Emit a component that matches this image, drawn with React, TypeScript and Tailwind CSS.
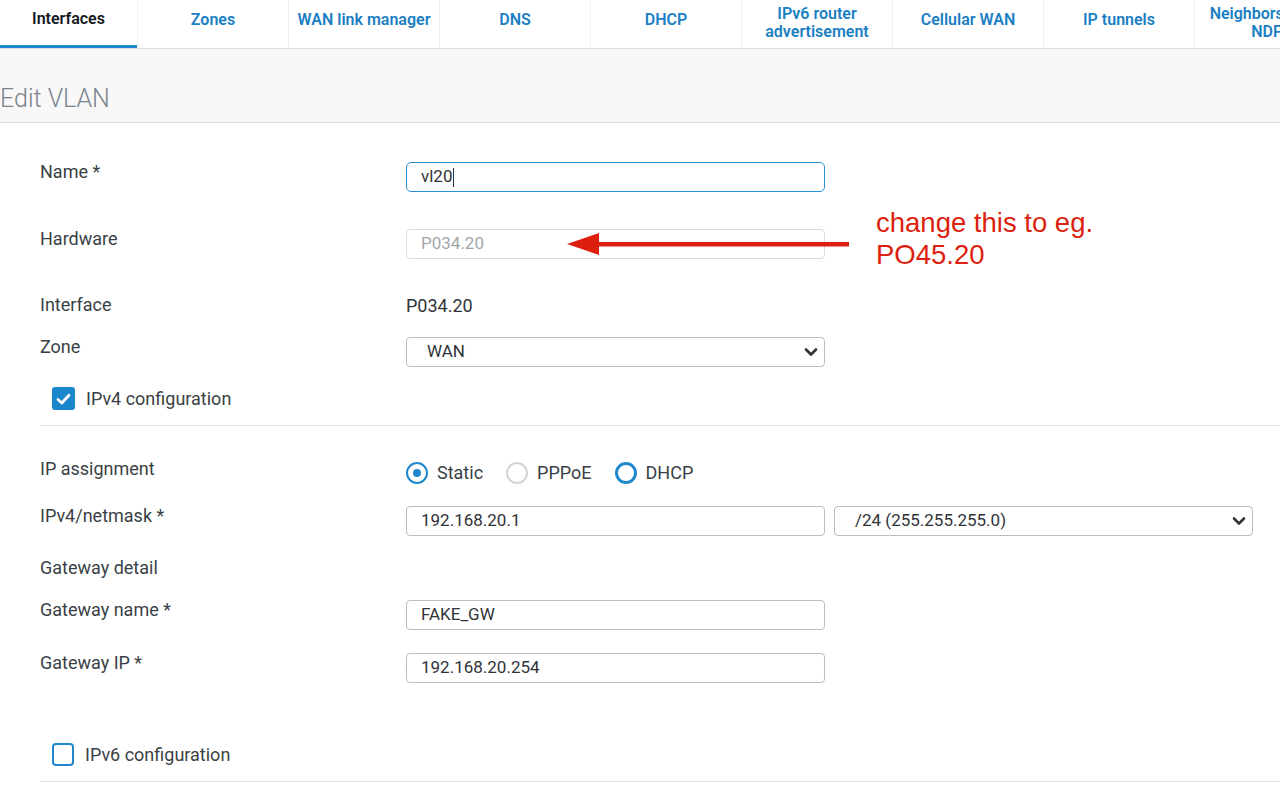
import React from 'react';

const TABS: { label: string[]; active?: boolean }[] = [
  { label: ['Interfaces'], active: true },
  { label: ['Zones'] },
  { label: ['WAN link manager'] },
  { label: ['DNS'] },
  { label: ['DHCP'] },
  { label: ['IPv6 router', 'advertisement'] },
  { label: ['Cellular WAN'] },
  { label: ['IP tunnels'] },
  { label: ['Neighbors (ARP-', 'NDP)'] },
];

function Chevron() {
  return (
    <svg width="14" height="10" viewBox="0 0 14 10" className="shrink-0">
      <path d="M2 2.5 L7 7.5 L12 2.5" fill="none" stroke="#2f353b" strokeWidth="2.6" strokeLinecap="round" strokeLinejoin="round" />
    </svg>
  );
}

function Label({ children }: { children: React.ReactNode }) {
  return <div className="w-[366px] shrink-0 text-[18px] leading-[20px] text-[#3a3f45]">{children}</div>;
}

function TextBox({ value, className = '' }: { value: string; className?: string }) {
  return (
    <div className={`w-[419px] h-[30px] rounded-[4px] border border-[#b8bdc2] flex items-center pl-[14px] text-[17px] text-[#2f3338] ${className}`}>
      {value}
    </div>
  );
}

function SelectBox({ value, width }: { value: string; width: string }) {
  return (
    <div className={`${width} h-[30px] rounded-[4px] border border-[#b8bdc2] flex items-center justify-between pl-[20px] pr-[6px] text-[17px] text-[#2f3338]`}>
      <span>{value}</span>
      <Chevron />
    </div>
  );
}

function Radio({ state }: { state: 'on' | 'off' | 'focus' }) {
  if (state === 'on') {
    return (
      <div className="w-[22px] h-[22px] rounded-full border-2 border-[#1f88cc] flex items-center justify-center">
        <div className="w-[8px] h-[8px] rounded-full bg-[#1f88cc]" />
      </div>
    );
  }
  if (state === 'focus') return <div className="w-[22px] h-[22px] rounded-full border-[3px] border-[#1f88cc]" />;
  return <div className="w-[22px] h-[22px] rounded-full border-2 border-[#d2d4d6]" />;
}

function CheckRow({ checked, label }: { checked: boolean; label: string }) {
  return (
    <div className="flex items-center h-[23px] pl-[12px]">
      {checked ? (
        <div className="w-[23px] h-[23px] rounded-[3px] bg-[#1a86cc] flex items-center justify-center">
          <svg width="15" height="12" viewBox="0 0 15 12">
            <path d="M2 6.5 L5.8 10 L13 2.2" fill="none" stroke="#fff" strokeWidth="2.8" strokeLinecap="round" strokeLinejoin="round" />
          </svg>
        </div>
      ) : (
        <div className="w-[22px] h-[23px] rounded-[4px] border-2 border-[#1f88cc]" />
      )}
      <span className="ml-[11px] text-[18px] text-[#3a3f45]">{label}</span>
    </div>
  );
}

export default function App() {
  return (
    <div className="w-[1280px] h-[812px] overflow-hidden bg-white relative" style={{ fontFamily: 'Roboto, "Noto Sans", sans-serif' }}>
      {/* Tabs */}
      <div className="flex h-[49px] border-b border-[#dcdcdc] bg-white">
        {TABS.map((t, i) => (
          <div
            key={i}
            className={`relative shrink-0 h-[48px] flex flex-col items-center justify-center text-[16px] leading-[18px] font-semibold whitespace-nowrap ${
              i === 0
                ? 'w-[137px] text-[#15191d] pb-[10px]'
                : `w-[151px] text-[#1b7fc3] border-l border-[#f1f1f1] ${t.label.length > 1 ? 'pb-[3px]' : 'pb-[8px]'}`
            }`}
          >
            {t.label.map((l) => (
              <span key={l}>{l}</span>
            ))}
            {t.active && <div className="absolute left-0 right-0 bottom-0 h-[3px] bg-[#1f88cc]" />}
          </div>
        ))}
      </div>

      {/* Header */}
      <div className="h-[74px] bg-[#f8f8f8] border-b border-[#dcdcdc] flex items-end pb-[8px]">
        <h1 className="text-[25px] font-light text-[#7a848c] leading-[30px]">Edit VLAN</h1>
      </div>

      {/* Form */}
      <div className="pl-[40px]">
        <div className="flex items-start mt-[39px] h-[30px]">
          <Label>Name *</Label>
          <div className="w-[419px] h-[30px] rounded-[5px] border-[1.5px] border-[#2a8fd6] flex items-center pl-[14px] text-[17px] text-[#2f3338]">
            vl20<span className="inline-block w-px h-[19px] bg-[#2f3338] ml-px" />
          </div>
        </div>

        <div className="flex items-start mt-[37px] h-[30px]">
          <Label>Hardware</Label>
          <TextBox value="P034.20" className="border-[#dadcde] text-[#a3a6a9]" />
        </div>

        <div className="flex items-center mt-[36px] h-[20px]">
          <Label>Interface</Label>
          <span className="text-[18px] text-[#2f3338]">P034.20</span>
        </div>

        <div className="flex items-start mt-[22px] h-[30px]">
          <Label>Zone</Label>
          <SelectBox value="WAN" width="w-[419px]" />
        </div>

        <div className="mt-[20px]">
          <CheckRow checked label="IPv4 configuration" />
        </div>
        <div className="mt-[15px] h-px bg-[#e2e2e2]" />

        <div className="flex items-start mt-[33px] h-[22px]">
          <Label>IP assignment</Label>
          <div className="flex items-center text-[18px] text-[#3a3f45]">
            <Radio state="on" />
            <span className="ml-[9px]">Static</span>
            <span className="ml-[23px]"><Radio state="off" /></span>
            <span className="ml-[9px]">PPPoE</span>
            <span className="ml-[23px]"><Radio state="focus" /></span>
            <span className="ml-[9px]">DHCP</span>
          </div>
        </div>

        <div className="flex items-start mt-[25px] h-[30px]">
          <Label>IPv4/netmask *</Label>
          <TextBox value="192.168.20.1" />
          <div className="ml-[9px]">
            <SelectBox value="/24 (255.255.255.0)" width="w-[419px]" />
          </div>
        </div>

        <div className="flex items-center mt-[22px] h-[20px]">
          <Label>Gateway detail</Label>
        </div>

        <div className="flex items-start mt-[22px] h-[30px]">
          <Label>Gateway name *</Label>
          <TextBox value="FAKE_GW" />
        </div>

        <div className="flex items-start mt-[23px] h-[30px]">
          <Label>Gateway IP *</Label>
          <TextBox value="192.168.20.254" />
        </div>

        <div className="mt-[60px]">
          <CheckRow checked={false} label="IPv6 configuration" />
        </div>
        <div className="mt-[15px] h-px bg-[#e2e2e2]" />
      </div>

      {/* Annotation */}
      <svg className="absolute left-[564px] top-[230px]" width="290" height="28" viewBox="0 0 290 28">
        <path d="M3 14 L35 3 L35 25 Z" fill="#dc1f0e" />
        <rect x="33" y="12" width="252" height="4.5" fill="#dc1f0e" />
      </svg>
      <div
        className="absolute left-[876px] top-[207px] text-[27.5px] leading-[32px] text-[#dc1f0e]"
        style={{ fontFamily: '"Liberation Sans", Arial, sans-serif' }}
      >
        change this to eg.
        <br />
        PO45.20
      </div>
    </div>
  );
}
